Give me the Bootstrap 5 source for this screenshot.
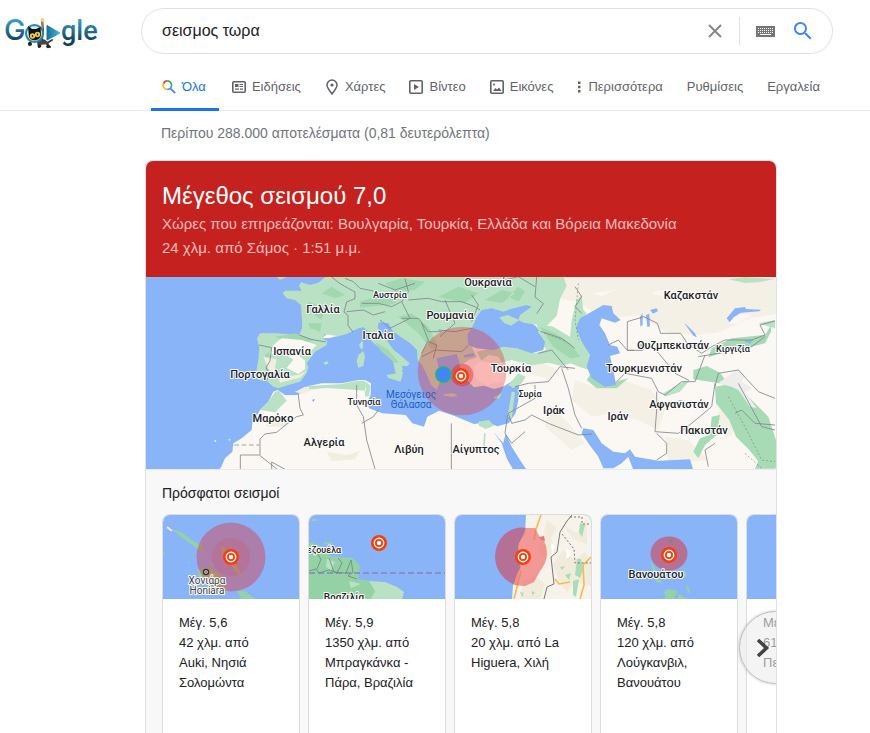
<!DOCTYPE html>
<html lang="el">
<head>
<meta charset="utf-8">
<meta name="viewport" content="width=device-width, initial-scale=1">
<title>σεισμος τωρα</title>
<link href="https://cdn.jsdelivr.net/npm/bootstrap@5.3.0/dist/css/bootstrap.min.css" rel="stylesheet">
<style>
body{font-family:"Liberation Sans",Arial,sans-serif;color:#202124;font-size:13px;line-height:20px}
.top-bar{padding:8px 37px 0 0}
.logo-link{width:141px;padding:4px 0 0 4px}
.search-box{height:46px;border:1px solid #dfe1e5;border-radius:24px;max-width:692px;padding:0 17px 0 20px}
.search-box input{font-size:16px;color:#202124;background:none;outline:0;min-width:0}
.search-box .rule{width:1px;height:28px;background:#dfe1e5}
.tabs-bar{border-bottom:1px solid #ebebeb;padding-left:151px;height:57px}
.tabs-bar a{color:#5f6368;padding:2px 12px 0;gap:6px;height:47px;text-decoration:none;white-space:nowrap;border-bottom:3px solid transparent;margin-bottom:-1px}
.tabs-bar a.current{color:#1a73e8;border-color:#1a73e8;padding:2px 13px 0 11px;margin-right:1px}
.tabs-bar a.more{gap:7px}
.results{padding-left:145px}
.stats{font-size:14px;color:#70757a;padding:12px 16px 17px}
.quake{max-width:632px;width:100%;border:1px solid #dfe1e5;border-bottom:0;border-radius:8px 8px 0 0;background:#f8f8f8}
.quake-head{background:#c5221f;color:#fff;padding:19px 16px 17px}
.quake-head h1{font-size:24px;line-height:32px}
.quake-head p{font-size:15px;line-height:24px;color:#f3bcb9}
.main-map{height:192px;width:100%}
.recent{border-top:1px solid #e8eaed;padding:11px 0 0 16px}
.recent h2{font-size:14px;line-height:24px;margin-bottom:9px}
.strip{gap:8px}
.event{flex:0 0 138px;border:1px solid #dadce0;border-bottom:0;border-radius:8px 8px 0 0;background:#fff;min-height:200px;text-decoration:none;color:#202124}
.event svg{height:84px;width:100%}
.event-text{padding:14px 24px 16px 16px}
.next-btn{right:-36px;top:97px;width:73px;height:73px;border:1px solid #bdbdbd;background:rgba(236,236,236,.6);box-shadow:0 0 3px rgba(0,0,0,.25);padding:0 0 0 16px}
.map-label{font-family:Roboto,"Noto Sans",sans-serif;font-weight:500;font-size:11px;fill:#202124;stroke:#fff;stroke-width:2px;stroke-linejoin:round;paint-order:stroke;text-anchor:middle}
.map-small{font-size:9px}
.map-sea{fill:#1f5fc4;stroke:none;font-weight:400;font-size:10px}
.map-town{font-weight:400;font-size:10px;fill:#3c4043}
.map-cut{font-size:10px}
</style>
<script src="https://cdn.jsdelivr.net/npm/bootstrap@5.3.0/dist/js/bootstrap.bundle.min.js"></script>
</head>
<body class="bg-white min-vh-100 d-flex flex-column overflow-x-hidden">
<svg width="0" height="0" class="position-absolute" aria-hidden="true">
  <defs>
    <g id="epicentre"><circle r="8" fill="#f4400c"/><circle r="4.7" fill="none" stroke="#fff" stroke-width="1.4"/><circle r="2.2" fill="#fff"/></g>
  </defs>
</svg>
<header>
  <div class="top-bar d-flex">
    <a href="#" class="logo-link flex-shrink-0" aria-label="Google">
      <svg width="94" height="38" viewBox="4 10 94 38">
        <defs><linearGradient id="teal" gradientUnits="userSpaceOnUse" x1="0" y1="17" x2="0" y2="42"><stop stop-color="#3ba3ca"/><stop offset=".9" stop-color="#123e5b"/></linearGradient>
        <linearGradient id="play"><stop stop-color="#1b709b"/><stop offset="1" stop-color="#43b7da"/></linearGradient></defs>
        <text x="4" y="38" font-family="Inter,sans-serif" font-size="29" font-weight="500" fill="url(#teal)">G</text>
        <text x="61" y="38" font-family="Roboto,sans-serif" font-size="27" font-weight="500" fill="url(#teal)">gle</text>
        <path d="M35 38c5-1 10 0 12 3l5-3M32 38l-3 4M38 40l1 5M46 41l4 4M42 37l1-9-1-10" fill="none" stroke="#3d3b3d" stroke-width="2" stroke-linecap="round"/>
        <path d="M36 39q6-2 11 1l2 2-9 1z" fill="#48464a"/>
        <circle cx="30" cy="42" r="2" fill="#222"/><circle cx="39.500" cy="44" r="1.800" fill="#222"/><circle cx="48" cy="44.500" r="1.800" fill="#222"/>
        <path d="M42.500 19v9" stroke="#b37a45" stroke-width="1.500"/><circle cx="42.500" cy="18" r="2" fill="#f1cf86"/>
        <circle cx="34.500" cy="31.500" r="8.500" fill="#c8edf7" stroke="#2784ad" stroke-width="2"/>
        <path d="M28 24l4 3h4l4.500-2 .5 8a6.500 6.500 0 0 1-12 2z" fill="#111216"/>
        <circle cx="32.500" cy="34" r="2.700" fill="#f5c53b"/><circle cx="37.500" cy="32.500" r="2.700" fill="#f5c53b"/>
        <path d="M32.500 33v2M37.500 31.500v2" stroke="#222" stroke-width="1.200"/>
        <path d="M47 23.500l13 7.500-13 7z" fill="url(#play)" stroke="url(#play)" stroke-linejoin="round"/>
      </svg>
    </a>
    <form class="search-box d-flex align-items-center flex-grow-1" role="search" onsubmit="return false">
      <input type="text" class="border-0 flex-grow-1 p-0" value="σεισμος τωρα" aria-label="Αναζήτηση">
      <button type="button" class="btn p-0 border-0 d-flex me-3" aria-label="Διαγραφή"><svg width="16" height="16" viewBox="0 0 16 16"><path d="M2 2l12 12M14 2L2 14" stroke="#80868b" stroke-width="1.900"/></svg></button>
      <span class="rule"></span>
      <button type="button" class="btn p-0 border-0 d-flex ms-3" aria-label="Πληκτρολόγιο"><svg width="19" height="11" viewBox="0 0 19 11"><path fill="#757575" d="M0 0h19v11H0z"/><path d="M2 2.500h15M2 4.500h15M2 6.500h15" stroke="#fff" stroke-dasharray="1 1"/><path d="M4 8.500h11" stroke="#fff"/></svg></button>
      <button type="submit" class="btn p-0 border-0 d-flex ms-3" aria-label="Αναζήτηση"><svg width="24" height="24" viewBox="0 0 24 24"><path fill="#4285f4" d="M15.500 14h-.8l-.3-.3A6.500 6.500 0 1 0 13.700 14.400l.3.300v.8l5 5 1.500-1.500zM9.500 14a4.500 4.500 0 1 1 0-9 4.500 4.500 0 0 1 0 9z"/></svg></button>
    </form>
  </div>
  <nav class="tabs-bar d-flex align-items-end" aria-label="Τύποι αποτελεσμάτων">
    <a href="#" class="current d-flex align-items-center"><svg width="14" height="14" viewBox="0 0 14 14" fill="none" stroke-width="1.700"><path d="M1.500 3.600A4.200 4.200 0 0 1 5.300.9" stroke="#ea4335"/><path d="M5.300.9A4.200 4.200 0 0 1 9.500 5.400" stroke="#34a853"/><path d="M1.500 3.300A4.200 4.200 0 0 0 5.300 9.400" stroke="#fbbc04"/><path d="M9.500 5.200A4.200 4.200 0 0 1 5.300 9.400M8.400 8.400L13.200 13.200" stroke="#4285f4"/></svg><span>Όλα</span></a>
    <a href="#" class="d-flex align-items-center"><svg width="14" height="14" viewBox="0 0 14 14" fill="none" stroke="#5f6368"><rect x=".8" y="1.800" width="12.400" height="10.400" rx="1" stroke-width="1.600"/><path d="M3 4h3.500v3H3z" fill="#5f6368" stroke="none"/><path d="M7.500 4.500H11M7.500 6.500H11M3 9.200h4M8 9.200h3" stroke-width="1.200"/></svg><span>Ειδήσεις</span></a>
    <a href="#" class="d-flex align-items-center"><svg width="14" height="16" viewBox="0 0 14 16"><path d="M7 1a5 5 0 0 1 5 5c0 3-3 6-5 9-2-3-5-6-5-9a5 5 0 0 1 5-5z" fill="none" stroke="#5f6368" stroke-width="1.500"/><circle cx="7" cy="6" r="1.600" fill="#5f6368"/></svg><span>Χάρτες</span></a>
    <a href="#" class="d-flex align-items-center"><svg width="14" height="14" viewBox="0 0 14 14"><rect x=".8" y=".8" width="12.400" height="12.400" rx="1" fill="none" stroke="#5f6368" stroke-width="1.600"/><path d="M5 4l5 3-5 3z" fill="#5f6368"/></svg><span>Βίντεο</span></a>
    <a href="#" class="d-flex align-items-center"><svg width="14" height="14" viewBox="0 0 14 14"><rect x=".8" y=".8" width="12.400" height="12.400" rx="1" fill="none" stroke="#5f6368" stroke-width="1.600"/><circle cx="4" cy="4.500" r="1" fill="#5f6368"/><path d="M3 11l2.500-3 1.500 1.500L9 7.500l2.500 3.500z" fill="#5f6368"/></svg><span>Εικόνες</span></a>
    <a href="#" class="more d-flex align-items-center"><svg width="4" height="14" viewBox="0 0 4 14" fill="#5f6368"><path d="M1 1.500h2.500V4H1zM1 5.800h2.500v2.400H1zM1 10h2.500v2.500H1z"/></svg><span>Περισσότερα</span></a>
    <a href="#" class="d-flex align-items-center">Ρυθμίσεις</a>
    <a href="#" class="d-flex align-items-center">Εργαλεία</a>
  </nav>
</header>
<main class="results d-flex flex-column flex-grow-1">
  <div class="stats">Περίπου 288.000 αποτελέσματα (0,81 δευτερόλεπτα)</div>
  <section class="quake d-flex flex-column flex-grow-1 overflow-hidden">
    <div class="quake-head">
      <h1 class="fw-normal m-0">Μέγεθος σεισμού 7,0</h1>
      <p class="m-0">Χώρες που επηρεάζονται: Βουλγαρία, Τουρκία, Ελλάδα και Βόρεια Μακεδονία</p>
      <p class="m-0">24 χλμ. από Σάμος · 1:51 μ.μ.</p>
    </div>
    <svg class="main-map d-block flex-shrink-0" viewBox="0 0 630 192" preserveAspectRatio="xMidYMid slice" role="img" aria-label="Χάρτης σεισμού">
      <path fill="#8ab4f8" d="M0 0h630v192H0z"/>
      <g transform="scale(.33333) translate(-3 -21)" stroke-linejoin="round">
        <!-- Africa and Asia -->
        <path fill="#fbf8f3" d="M222 600l8-12 10-23 22-20 3-25 25-15 30-25 2-20 23-40 25-25 15-30 13-5 22 15h40l30-27 40-8h60l50-10h20l18 10-1 35-10 20 5 20 40 15 70 5 20 25 35 10 10-30 35-18 45 15 60 25 40-5 30 12 35-10 20-30 10-50v-35l-15-15-30 20-30 8-30-10-30 5-25-25-15-30-15-50 25-14 40-6 60-15 50 8 50 13 35-10 5-25-25-30-50-35 20-30 40-20 20-69V18H1896V600z"/>
        <path fill="#f3efe3" d="M1230 21h663v110l-80 15-90 40-70 10-90-10-80-50-110 10-70-50-60-10zM1290 330l60 20 80-20 90 30 40 60-20 60-60-30-80-20-60 10-60-50zM1560 500l70 10 60 60-120 10zM1210 400l60 60 50 60-40 20-80-70zM1730 380l60 20-30 100-50-20zM1110 270l60 0 70 30-20 30-70-20z" opacity=".85"/>
        <path fill="#fbf8f3" d="M1440 170l70 10 60 30 10 40-60-20-70-20zM1760 130l60 5-40 25-30 0zM1540 60l60 10-30 10-50-8zM1340 70l70-10-40 18z"/>
        <!-- Turkey and Caucasus greenery -->
        <path fill="#b9e2c5" d="M995 245l80-20 60 15 35 10 40-12 30 22 50 16-40 12-40-10-50 8-60-16-50 12-40-8zM1090 345l30-35 22 10-12 20-25 15zM1100 365l10 2-10 80-12-8zM1175 160l50 10 50 30 5-50 15-60 15-15 5 45 10 10-15 25-12 25 22 45 22 45-10 30-30-10-50-20-40-20-30-40z"/>
        <path fill="#a1d8af" d="M1185 170l45 20 45 30 30 40-30 5-50-35z"/>
        <!-- Europe -->
        <path fill="#b9e2c5" d="M700 18H1255l10 30-20 40-10 50-30 30-70-10-60-20-60-10-60 20-60 60-150-20z"/>
        <path fill="#b9e2c5" d="M545 18l-25 20-25 7-27-8-6 11 8 14h-50l-7 8 12 15 25 5 18 15 4 65-9 25-68-5-50 0-9 15 7 30-3 35-7 40 7 20 25 2 20 18 15 5 30-10 35-10 20-25 5-20-5-10 25-35 35-20 2-12-17-8 10-13 35 8 30-8 35-17 15-3 10 8 14 32 40 36 25 25 7 34 12 12 10-20-2-12 16 2 7-9-33-29-15-11-25-35-23-30 3-18 30 3 10 20 25 20 30 20 20 20 2 30 13 15 15 30 12 30 18 15 5-15 10-20 5-24 20-12 40-8 15-11 25-8-15-30 15-28 12-26 15-20 30-5 35 10 45-14 60-11V18z"/>
        <path fill="#a1d8af" d="M560 50l40 25-30 10-40-15zM490 95l50 20-10 35-35-25zM490 160l40 0-5 25-30-10zM390 200l60-10 60 20-30 8-60-6zM645 95l60-20 60 10-20 18-100 10zM720 40l50-15 70 10-30 25-60 5zM800 130l50 40 30 60-20 10-40-50-60-50zM880 80l60-30 60 20-40 30zM1020 90l50-30 40 10-40 30zM1090 80l30 15 20-30-20-15zM360 255l12-10 5 60-10 10zM690 215l40 25 30 35-10 5-40-35z"/>
        <path fill="#fbf8f3" d="M385 225l25-20 60 5 45 15-20 20-45 2 30 25 0 25-20 15-35-18 20-25-30-20-40 4zM530 205l15-12 30 5-20 6z"/>
        <path fill="#f1eddf" d="M355 260l40 8-10 50-15-20zM400 320l60-5 25-12-20 20-60 15zM450 365l30-15 50 0-60 22zM365 470l60 0 20-25-20 10-60 0zM545 545l60 10 40-12-15 25-70 5z"/>
        <path fill="#b9e2c5" d="M390 365l12-3 23 30-20 20-15 15-45-7 25-25zM490 348l100-6 45-10 25 0 3 30-60-4-60-4-50 4zM660 360l0 20 12-2 5-30-15-14zM1000 455l32-5 15 17-25 10-20-10zM1017 490l5 0-3 50-5-5z"/>
        <!-- islands -->
        <path fill="#b9e2c5" d="M640 255l15-12 5 15-5 30-15 5-5-20zM642 225l10-15 3 20-6 10zM725 315l30-5 20-5-8 30-38-12zM535 278l12-4 4 6-10 5zM895 372l28-2 15 6-15 5-25-4zM1048 380l22-10-8 15-15 2zM395 21h30l-20 8z"/>
        <path fill="#fbf8f3" d="M206 512l8-2-2 7zM250 508l7 0-4 5z"/>
        <!-- central Asia mountains -->
        <path fill="#a7dbb5" d="M1700 235l60-30 100-10 18-30v20l-18 35-80 20-60 12-30 10zM1645 300l40-12 40 20 30 40-40-10-70-10zM1710 350l60-10 40 40 60 60 23 70v85l-40-5-40-50-40-40-20-50-40-50zM1700 440l25-5-10 60-35 30-20 40-15-20 20-40 30-10zM1850 550l40 0v46h-60zM1325 330l30 25 60 0 35-30-20 5-35 10-60-25z"/>
        <path fill="#b9e2c5" d="M1555 370l50-30 30-10-30 35-45 15zM1750 28l50-7 90 6-50 10-40 2zM1840 160l50-10v25z"/>
        <path fill="#ededed" d="M1720 340l60-45 20 20-10 20 30 20-20 10 35 50-20-5-35-50-20-10z"/>
        <!-- seas and lakes -->
        <g fill="#8ab4f8">
          <path d="M1010 120l30-5 35 10 20-7 50-13 15 5-35 25-5 15 55 30 25 35-5 25-35 10-45-15-40-5-30 10-50-5-25-10-3-30 18-30 10-25z"/>
          <path d="M955 256l30-7 5 9-30 5zM875 265l60-13 10 30-15 8 20 50-10 30-40-15-15-40z"/>
          <path d="M1375 105l25 3 5 22 22 20-17 8-40-13-7 20 17 25 15 35 22 5 8 20-30 8 10 42 8 45-33 5-40-25-15-35 10-35-25-40-17-40 12-30 35-20z"/>
          <path d="M1045 485l25 35 15 45 20 35h40l-20-30-25-40-18-40-7 30z"/>
          <path d="M1315 475l30 5 25 40 35 25 35 5 15-12 15 22 70 12 95-4 10 32h-180l-15-40-20 20-25 15h-30l-15-35-30-40-20-30z"/>
          <path d="M1745 145l25-30 30-4 3 6 45 2-5 5-55 4-22 14-12 15zM1485 140l8-10 0 35-7 5zM1503 135l10-4 2 38-8 2zM1515 120l20-5 4 8-15 8zM1620 160l30 30 5 12-10-5-25-35zM1795 212l30-3-10 12zM1480 225l15-5-8 15zM1600 390l10 0 0 10zM500 390l10-4-4 10z"/>
        </g>
        <path fill="#b9e2c5" d="M1063 142l25-7 35 15-25 17-20-7z"/>
        <!-- borders -->
        <g fill="none" stroke="#7f868b" stroke-width="2.500">
          <path d="M463 195l35 13 45 8M342 225l38 8-5 40-12 20 10 20-8 20M560 21l25 20 45 25 0 20-25 10-8 30 12 10 0 30 15 20M600 25l25 10 20 20 40 8M605 125l50-5 30 15 35-10M650 100l50 0 40 10 30-15 20-30-10-40M700 40l50 20 60-20M790 90l60-5 40 10 60 0 40 15 15 10M770 95l25 50-60 30-30-25M770 145l50 0 30 40 40 0M830 160l20 50-20 40M900 90l30 70-45 40M880 180l50 5 50-10M980 75l20 30-20 50M830 260l40-20 80 5 20-18M850 215l25 10-10 40M1175 21l-5 60 25 20-20 30M1080 30l40-10 50 30M1190 185l60 20 40 30M1180 250l40-10 50 60M1110 350l40-10 60-5 35-45 45 5M1170 345l0 40-80 45M1090 430l10 30 40-10 20-15M1160 435l50 25 90 35 40-3M1250 295l20 60 20 80 20 40M1290 50l20 30-20 30 20 20"/>
          <path d="M460 375l5 40 10 20-20 5-30 22-30 25-35 5-15 15v50l95 75M343 555h-57v42M420 598l-40-22v22M635 345l0 60 20 35 10 70 25 87M919 598V460M1088 435l-8 55 20 30 40-35M700 420l-15 20-35 20"/>
          <path d="M1447 241V155l50-15 40 20 10 30h60l20 30 40 10M1390 225l30-15 27 31h20M1447 241l45 0 20-20 30 30 50 60 40 20M1415 335l25-25 80 15 20 40 20 10 50-40 40 0 30-80M1535 365l0 55-5 65 70 5 40-30 60-50 10-70M1535 490l30 30 0 30-30 20M1640 230l30 20 30-20 40-20 80 0 40-15-15-30 45-12M1660 260l60-10 100-20 40-30M1710 350l10-40 60-10 60 65 50 20M1780 340l70 130 40 10M1710 520l-30 20 10 50M1770 430l20-10 40 40 60 5"/>
        </g>
        <path d="M268 525h75" stroke="#bdbdbd" stroke-width="5" stroke-dasharray="14 8"/>
        <path d="M1750 380l50 90 50 100 40 5M1175 180l90 35M1300 40l-10 110 10 60M1800 550l50 45" fill="none" stroke="#788b81" stroke-width="2" stroke-dasharray="6 6"/>
        <circle cx="951" cy="303" r="133" fill="#e02d32" fill-opacity=".35"/>
        <path d="M985 290l45-35 30 5 20 35-5 40-50 10-30-15z" fill="#ffbcb8" opacity=".6"/>
        <circle cx="951" cy="315" r="34" fill="#e02d32" fill-opacity=".45"/>
      </g>
      <circle cx="297.500" cy="97.500" r="8" fill="#4285f4" stroke="#1ccf3f" stroke-width="1.200"/>
      <use href="#epicentre" x="315" y="99"/>
      <g class="map-label">
        <text x="177" y="36">Γαλλία</text><text x="146" y="78">Ισπανία</text><text x="114" y="101">Πορτογαλία</text><text x="127" y="145">Μαρόκο</text><text x="178" y="169">Αλγερία</text><text x="232" y="62">Ιταλία</text><text x="342" y="9">Ουκρανία</text><text x="304" y="42">Ρουμανία</text><text x="365" y="95">Τουρκία</text><text x="408" y="137">Ιράκ</text><text x="263" y="176">Λιβύη</text><text x="330" y="176">Αίγυπτος</text><text x="545" y="22">Καζακστάν</text><text x="527" y="72">Ουζμπεκιστάν</text><text x="498" y="95">Τουρκμενιστάν</text><text x="533" y="131">Αφγανιστάν</text><text x="472" y="143">Ιράν</text><text x="558" y="157">Πακιστάν</text>
      </g>
      <g class="map-label map-small"><text x="244" y="21">Αυστρία</text><text x="218" y="128">Τυνησία</text><text x="384" y="120">Συρία</text><text x="587" y="75">Κιργιζία</text></g>
      <g class="map-label map-sea"><text x="265" y="121">Μεσόγειος</text><text x="265" y="131">Θάλασσα</text></g>
    </svg>
    <div class="recent d-flex flex-column flex-grow-1 position-relative overflow-hidden">
      <h2 class="fw-normal">Πρόσφατοι σεισμοί</h2>
      <div class="strip d-flex flex-grow-1 position-relative">
        <a href="#" class="event d-block overflow-hidden">
          <svg class="d-block" viewBox="0 0 136 84" preserveAspectRatio="xMidYMid slice" aria-hidden="true"><path fill="#8ab4f8" d="M0 0h136v84H0z"/><path fill="#94d2a5" d="M8 14l10 3 12 9 8 4 3 8-12-8-12-9zM35 54l10-1 12 7 8 16-15-2-14-10zM58 31l6 4 16 27-5-4-15-20zM74 76l8 0 10 8H78zM47 47l5 3-4 1zM0 35l2 5H0zM24 47h3v2z"/><path d="M4 12l5 4" stroke="#e8ecef" stroke-width="2"/><circle cx="68" cy="42" r="34.500" fill="#e02d32" fill-opacity=".4"/><circle cx="68" cy="42" r="19" fill="#e02d32" fill-opacity=".12"/><path fill="#b88b5c" opacity=".65" d="M35 31l6 3-2 3zM57 31l7 4 16 27-6-4-14-18zM36 54l14 0 10 8-9 2z"/><circle cx="43" cy="57" r="2.500" fill="#fff" stroke="#333" stroke-width="1.500"/><circle cx="43" cy="57" r=".8"/><use href="#epicentre" x="68" y="42"/><g class="map-label map-town"><text x="44" y="69">Χονιάρα</text><text x="44" y="79">Honiara</text></g></svg>
          <div class="event-text">Μέγ. 5,6<br>42 χλμ. από Auki, Νησιά Σολομώντα</div>
        </a>
        <a href="#" class="event d-block overflow-hidden">
          <svg class="d-block" viewBox="0 0 136 84" preserveAspectRatio="xMidYMid slice" aria-hidden="true"><path fill="#8ab4f8" d="M0 0h136v84H0z"/><path fill="#94d2a5" d="M0 27l12 4 10 10 22 2 7 8-2 13 12 2 18 6 14 12H0z"/><path fill="#b9e2c5" d="M60 66l16 1 12 5 7 5-2 7H62l4-8zM18 44l8 3-4 8-5-3zM40 66l12 3-10 4z"/><path d="M0 56l7-2 3 4 10-3 8 3 5-10-4-5M20 43l5 14 12 1 5-13M42 45l2 12-5 4 9 3M8 54l4-10-5-7" fill="none" stroke="#698974" stroke-width=".8"/><path d="M0 58h136" stroke="#8583ba" stroke-width="1.500" stroke-dasharray="6 3"/><path d="M3 5h5M15 28h8" stroke="#94d2a5" stroke-width="2"/><use href="#epicentre" x="70" y="28"/><g class="map-label map-small"><text x="15" y="38">εζουέλα</text><text x="35" y="86" class="map-cut">Βραζιλία</text></g></svg>
          <div class="event-text">Μέγ. 5,9<br>1350 χλμ. από Μπραγκάνκα - Πάρα, Βραζιλία</div>
        </a>
        <a href="#" class="event d-block overflow-hidden">
          <svg class="d-block" viewBox="0 0 136 84" preserveAspectRatio="xMidYMid slice" aria-hidden="true"><path fill="#8ab4f8" d="M0 0h136v84H0z"/><path fill="#f7f3eb" d="M71 0h65v84H57l1-13 4-12 4-7-4-10 2-14 6-10z"/><path fill="#f0ebda" d="M92 5l10 8-6 10 4 12-9 10-8-10 5-14zM108 35l12 10 10-8 6 8v26l-16-4-8 10-8-10-6-18zM68 66l12-5 10 8-5 15H65zM108 10l14 8 10-14v25l-14-5z"/><path fill="#fff" d="M112 34l6 5-7 5zM96 28l4 3-3 9z"/><path fill="#abdcb8" d="M125 8l5 2-3 12-3-5zM122 44l4 0 2 11-3 8-5-3zM118 66l6-2-3 18-3-2zM110 60l6-2-2 7zM65 77l4 1-2 4zM77 76l3 2-3 2zM105 52l5-1-3 4z"/><path d="M86 0l-5 14-2 11M59 84l7-28M100 64l4 5 11-2M136 42l-8 8 1 20-4 14" fill="none" stroke="#f3bc4c" stroke-width="1.600"/><path d="M117 0l-5 6-7 11-3 20-6 5 3 27-7 3-3 12" fill="none" stroke="#777"/><path d="M115 2h12v7h9M107 19l12 15 1 14h16" fill="none" stroke="#777" stroke-dasharray="2 2"/><path fill="#e02d32" fill-opacity=".5" d="M40 42a27 29 0 0 1 32-29l8 0 4 8 5 5a27 27 0 0 1-4 30l-6 11-9 4-10-1a31 31 0 0 1-20-28z"/><path fill="#ffaaa2" opacity=".35" d="M71 13h9l4 8 5 5a27 27 0 0 1-4 30l-6 11-9 4-8 0 4-27-3-13z"/><path fill="#e57978" d="M84 22l5-1 1 5-4-1z"/><use href="#epicentre" x="68" y="42"/></svg>
          <div class="event-text">Μέγ. 5,8<br>20 χλμ. από La Higuera, Χιλή</div>
        </a>
        <a href="#" class="event d-block overflow-hidden">
          <svg class="d-block" viewBox="0 0 136 84" preserveAspectRatio="xMidYMid slice" aria-hidden="true"><path fill="#8ab4f8" d="M0 0h136v84H0z"/><path fill="#94d2a5" d="M50 46l4 7 3 10 5 5-7-1-3-9zM83 52l3 12-3-4zM85 69l4 7-2 3zM67 74l10 2-4 8h-8l-2-7zM77 79l10 5H77z"/><ellipse cx="68" cy="38.500" rx="18.500" ry="17" fill="#e02d32" fill-opacity=".5"/><path fill="#678f66" d="M69 24l3 2-3 2z"/><use href="#epicentre" x="68" y="40"/><text class="map-label" x="55" y="63">Βανουάτου</text></svg>
          <div class="event-text">Μέγ. 5,8<br>120 χλμ. από Λούγκανβιλ, Βανουάτου</div>
        </a>
        <a href="#" class="event d-block overflow-hidden">
          <svg class="d-block" viewBox="0 0 136 84" preserveAspectRatio="xMidYMid slice" aria-hidden="true"><path fill="#8ab4f8" d="M0 0h136v84H0z"/></svg>
          <div class="event-text">Μέγ. 5,8<br>61 χλμ. από<br>Περού</div>
        </a>
        <button type="button" class="next-btn btn rounded-circle position-absolute d-flex align-items-center" aria-label="Επόμενο"><svg width="14" height="20" viewBox="0 0 14 20"><path d="M2 2l8.500 8L2 18" fill="none" stroke="#424242" stroke-width="3.500"/></svg></button>
      </div>
    </div>
  </section>
</main>
</body>
</html>
